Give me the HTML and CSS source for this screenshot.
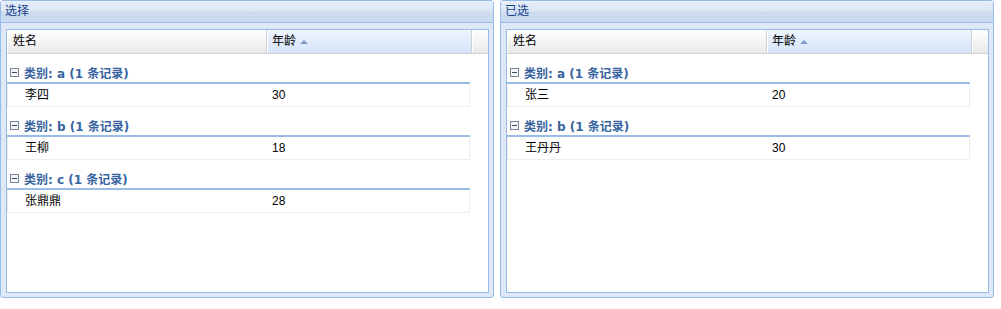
FILE: index.html
```html
<!DOCTYPE html>
<html lang="zh">
<head>
  <meta charset="UTF-8">
  <title>选择 / 已选</title>
  <link rel="stylesheet" href="styles.css">
</head>
<body>

  <div class="panels">

    <!-- 选择 -->
    <div class="panel">
      <div class="panel-title">选择</div>
      <div class="panel-body">
        <div class="grid">
          <div class="grid-head">
            <div class="hd hd-name">姓名</div>
            <div class="hd hd-age sorted">年龄<span class="sort-arrow"></span></div>
            <div class="hd hd-fill"></div>
          </div>
          <div class="grid-body">
            <div class="group">
              <div class="group-hd"><span class="toggle"></span>类别: a (1 条记录)</div>
              <div class="row">
                <div class="cell cell-name">李四</div>
                <div class="cell cell-age">30</div>
              </div>
            </div>
            <div class="group">
              <div class="group-hd"><span class="toggle"></span>类别: b (1 条记录)</div>
              <div class="row">
                <div class="cell cell-name">王柳</div>
                <div class="cell cell-age">18</div>
              </div>
            </div>
            <div class="group">
              <div class="group-hd"><span class="toggle"></span>类别: c (1 条记录)</div>
              <div class="row">
                <div class="cell cell-name">张鼎鼎</div>
                <div class="cell cell-age">28</div>
              </div>
            </div>
          </div>
        </div>
      </div>
    </div>

    <!-- 已选 -->
    <div class="panel">
      <div class="panel-title">已选</div>
      <div class="panel-body">
        <div class="grid">
          <div class="grid-head">
            <div class="hd hd-name">姓名</div>
            <div class="hd hd-age sorted">年龄<span class="sort-arrow"></span></div>
            <div class="hd hd-fill"></div>
          </div>
          <div class="grid-body">
            <div class="group">
              <div class="group-hd"><span class="toggle"></span>类别: a (1 条记录)</div>
              <div class="row">
                <div class="cell cell-name">张三</div>
                <div class="cell cell-age">20</div>
              </div>
            </div>
            <div class="group">
              <div class="group-hd"><span class="toggle"></span>类别: b (1 条记录)</div>
              <div class="row">
                <div class="cell cell-name">王丹丹</div>
                <div class="cell cell-age">30</div>
              </div>
            </div>
          </div>
        </div>
      </div>
    </div>

  </div>

</body>
</html>
```

FILE: styles.css
```css
body {
  margin: 0;
  background: #fff;
  font-family: 'Liberation Sans', 'Noto Sans CJK SC', sans-serif;
  font-size: 12px;
  color: #000;
}

.panels {
  display: flex;
  gap: 6px;
}

.panel {
  width: 494px;
  height: 298px;
  box-sizing: border-box;
  display: flex;
  flex-direction: column;
  background: #dfe8f6;
  border: 1px solid #99bbe8;
  border-radius: 3px;
}

.panel-title {
  height: 21px;
  line-height: 21px;
  padding-left: 4px;
  color: #15428b;
  background: linear-gradient(#e6eef9 0%, #dde7f5 46%, #cddbf0 52%, #cbdaf0 100%);
  border-bottom: 1px solid #99bbe8;
}

.panel-body {
  flex: 1;
  display: flex;
  padding: 6px 4px 4px 5px;
}

.grid {
  flex: 1;
  display: flex;
  flex-direction: column;
  background: #fff;
  border: 1px solid #99bbe8;
  overflow: hidden;
}

.grid-head {
  display: flex;
  height: 24px;
  box-sizing: border-box;
  border-bottom: 1px solid #d0d0d0;
  background: linear-gradient(#ffffff 0%, #f4f4f4 50%, #e8e8e8 100%);
}

.hd {
  box-sizing: border-box;
  line-height: 23px;
  border-left: 1px solid #fff;
  border-right: 1px solid #d0d0d0;
}

.hd-name {
  width: 260px;
  padding-left: 5px;
}

.hd-age {
  width: 205px;
  padding-left: 4px;
}

.hd-fill {
  flex: 1;
  border-right: none;
}

.sorted {
  background: linear-gradient(#edf4fd 0%, #e1ecfb 50%, #d6e5fa 100%);
}

.sort-arrow {
  display: inline-block;
  margin-left: 4px;
  vertical-align: middle;
  border-left: 4px solid transparent;
  border-right: 4px solid transparent;
  border-bottom: 4px solid #7f9dc9;
}

.group {
  width: 463px;
}

.group-hd {
  display: flex;
  align-items: center;
  height: 16px;
  padding: 10px 0 2px 3px;
  border-bottom: 2px solid #99bbe8;
  font-family: 'DejaVu Sans', 'Noto Sans CJK SC', sans-serif;
  font-weight: bold;
  color: #3764a0;
}

.toggle {
  position: relative;
  width: 9px;
  height: 9px;
  box-sizing: border-box;
  margin-right: 5px;
  border: 1px solid #7a8799;
  background: #f4f6f9;
}

.toggle::after {
  content: '';
  position: absolute;
  left: 1px;
  top: 3px;
  width: 5px;
  height: 1px;
  background: #3b4a60;
}

.row {
  display: flex;
  height: 23px;
  box-sizing: border-box;
  border: 1px solid #ededed;
  border-top-color: #fff;
}

.cell {
  line-height: 21px;
  white-space: nowrap;
}

.cell-name {
  width: 258px;
  padding-left: 17px;
  box-sizing: border-box;
}

.cell-age {
  width: 203px;
  padding-left: 6px;
  box-sizing: border-box;
}
```
